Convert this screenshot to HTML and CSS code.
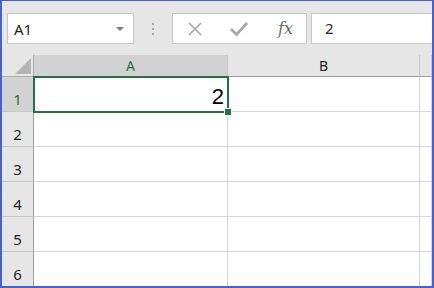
FILE: index.html
```html
<!DOCTYPE html>
<html lang="en">
<head>
    <meta charset="UTF-8">
    <title>Sheet</title>
    <link rel="stylesheet" href="styles.css">
</head>
<body>
    <div class="frame">
        <!-- name box + formula bar -->
        <div class="toolbar">
            <div class="namebox">
                <span class="ref">A1</span>
                <span class="arrow"></span>
            </div>
            <div class="grip"><i></i><i></i><i></i></div>
            <div class="fxbox">
                <svg class="ico" width="16" height="16" viewBox="0 0 16 16">
                    <path d="M2 2 L14 14 M14 2 L2 14" stroke="#a6a6a6" stroke-width="1.6" fill="none"/>
                </svg>
                <svg class="ico" width="18" height="16" viewBox="0 0 18 16">
                    <path d="M1 8 L6.5 13.5 L17 2" stroke="#a6a6a6" stroke-width="2.6" fill="none"/>
                </svg>
                <span class="fx">fx</span>
            </div>
            <div class="formula">2</div>
        </div>

        <!-- worksheet grid -->
        <div class="sheet">
            <div class="corner"><span class="tri"></span></div>
            <div class="colhead sel">A</div>
            <div class="colhead">B</div>
            <div class="colhead"></div>

            <div class="rowhead sel">1</div>
            <div class="cell active">
                <span class="val">2</span>
                <div class="selbox"><span class="handle"></span></div>
            </div>
            <div class="cell"></div>
            <div class="cell"></div>

            <div class="rowhead">2</div>
            <div class="cell"></div><div class="cell"></div><div class="cell"></div>
            <div class="rowhead">3</div>
            <div class="cell"></div><div class="cell"></div><div class="cell"></div>
            <div class="rowhead">4</div>
            <div class="cell"></div><div class="cell"></div><div class="cell"></div>
            <div class="rowhead">5</div>
            <div class="cell"></div><div class="cell"></div><div class="cell"></div>
            <div class="rowhead">6</div>
            <div class="cell"></div><div class="cell"></div><div class="cell"></div>
        </div>
    </div>
</body>
</html>
```

FILE: styles.css
```css
html, body {
    margin: 0;
    padding: 0;
    overflow: hidden;
}
body {
    font-family: "Noto Sans", "DejaVu Sans", sans-serif;
    background: #fff;
}
.frame {
    width: 434px;
    height: 288px;
    box-sizing: border-box;
    border: 2px solid #4760d6;
    border-top-width: 1px;
    background: #e6e6e6;
    overflow: hidden;
}
.toolbar {
    display: flex;
    align-items: flex-start;
    height: 54px;
    padding: 12px 0 0 5px;
    box-sizing: border-box;
}
.namebox {
    width: 127px;
    height: 31px;
    box-sizing: border-box;
    background: #fff;
    border: 1px solid #c6c6c6;
    display: flex;
    align-items: center;
    justify-content: space-between;
    padding: 0 9px 0 6px;
}
.ref {
    font-size: 15px;
    color: #1e1e1e;
}
.arrow {
    width: 0;
    height: 0;
    border-left: 4px solid transparent;
    border-right: 4px solid transparent;
    border-top: 4px solid #7a7a7a;
}
.grip {
    width: 38px;
    height: 31px;
    display: flex;
    flex-direction: column;
    align-items: center;
    justify-content: center;
    gap: 3px;
}
.grip i {
    width: 2px;
    height: 2px;
    background: #a8a8a8;
}
.fxbox {
    width: 135px;
    height: 31px;
    box-sizing: border-box;
    background: #fff;
    border: 1px solid #c6c6c6;
    display: flex;
    align-items: center;
    padding-left: 14px;
    gap: 27px;
}
.fx {
    font-family: "DejaVu Serif", "Liberation Serif", serif;
    font-style: italic;
    font-size: 16px;
    color: #6a6a6a;
    margin-left: 3px;
}
.formula {
    flex: 1;
    height: 31px;
    box-sizing: border-box;
    margin-left: 4px;
    background: #fff;
    border: 1px solid #c6c6c6;
    border-right: none;
    font-size: 15px;
    line-height: 29px;
    padding-left: 13px;
    color: #1e1e1e;
}
.sheet {
    display: grid;
    grid-template-columns: 32px 194px 192px 1fr;
    grid-template-rows: 22px repeat(6, 35px);
    background: #fff;
}
.corner, .colhead, .rowhead {
    background: #e6e6e6;
    box-sizing: border-box;
}
.corner {
    position: relative;
    border-right: 1px solid #ababab;
    border-bottom: 1px solid #ababab;
}
.tri {
    position: absolute;
    right: 2px;
    bottom: 2px;
    width: 0;
    height: 0;
    border-left: 16px solid transparent;
    border-bottom: 16px solid #b5b5b5;
}
.colhead {
    border-right: 1px solid #c6c6c6;
    border-bottom: 1px solid #9b9b9b;
    font-size: 14px;
    color: #1e1e1e;
    text-align: center;
    line-height: 21px;
}
.rowhead {
    border-right: 1px solid #9b9b9b;
    border-bottom: 1px solid #c6c6c6;
    font-size: 15px;
    color: #1e1e1e;
    display: flex;
    align-items: flex-end;
    justify-content: center;
    padding-bottom: 2px;
}
.sel {
    background: #d2d2d2;
    color: #217346;
}
.colhead.sel {
    border-bottom-color: #217346;
}
.rowhead.sel {
    border-right-color: #217346;
}
.cell {
    border-right: 1px solid #d4d4d4;
    border-bottom: 1px solid #d4d4d4;
    box-sizing: border-box;
}
.active {
    position: relative;
    display: flex;
    align-items: flex-end;
    justify-content: flex-end;
    padding: 0 3px 2px 0;
}
.val {
    font-family: "Liberation Sans", Arial, sans-serif;
    font-size: 22px;
    line-height: 24px;
    color: #000;
}
.selbox {
    position: absolute;
    left: -1px;
    top: -1px;
    right: -2px;
    bottom: -2px;
    border: 2px solid #217346;
}
.handle {
    position: absolute;
    right: -5px;
    bottom: -5px;
    width: 6px;
    height: 6px;
    background: #217346;
    border: 1px solid #fff;
}
```
